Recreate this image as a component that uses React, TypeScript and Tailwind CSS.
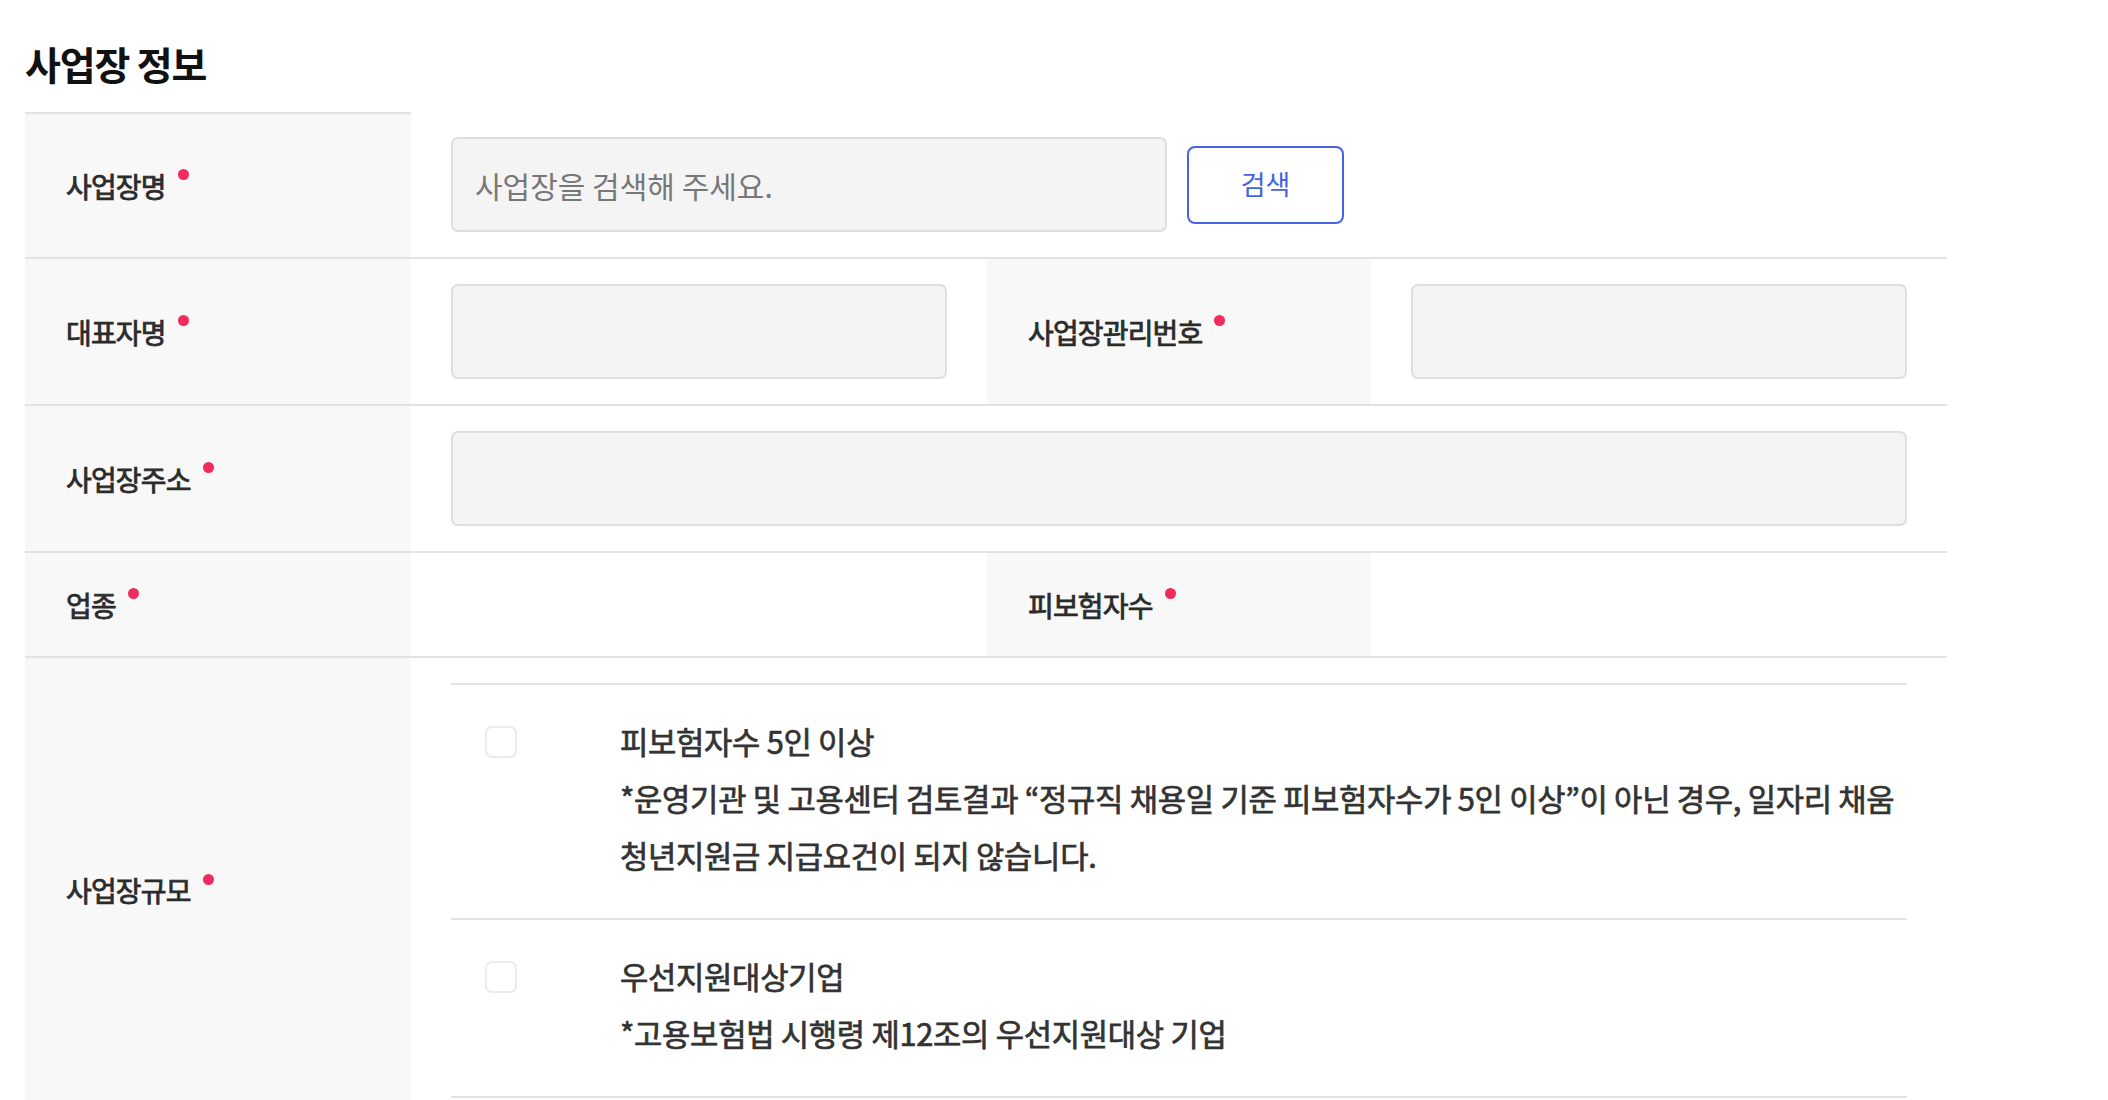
import type { ReactNode } from 'react';
import clsx from 'clsx';

const line = 'border-b-2 border-[#e2e2e2]';

function Label({ children, className }: { children: ReactNode; className?: string }) {
  return (
    <div className={clsx('flex items-center bg-[#f8f8f8] pl-[41px]', line, className)}>
      <span className="text-[28px] tracking-[-0.03em] text-[#2b2b2b] [-webkit-text-stroke:0.8px_#2b2b2b]">{children}</span>
      <span className="-mt-[22px] ml-[12px] h-[11px] w-[11px] rounded-full bg-[#ef2b5f]" />
    </div>
  );
}

function Field({ className, placeholder }: { className?: string; placeholder?: string }) {
  return (
    <input
      type="text"
      placeholder={placeholder}
      className={clsx(
        'h-[95px] rounded-[7px] border-2 border-[#dedede] bg-[#f4f4f4] px-[22px] text-[30px] text-[#333] outline-none placeholder:text-[#777]',
        className,
      )}
    />
  );
}

function CheckItem({ lines }: { lines: string[] }) {
  return (
    <div className={clsx('flex pb-[35px] pt-[27px]', line)}>
      <div className="pl-[34px] pr-[103px]">
        <span className="mt-[14px] block h-[32px] w-[32px] rounded-[7px] border-2 border-[#ebebeb] bg-white" />
      </div>
      <div className="text-[30.8px] leading-[57px] tracking-[-0.01em] text-[#333] [-webkit-text-stroke:0.7px_#333]">
        {lines.map((t) => (
          <p key={t} className="whitespace-nowrap">{t}</p>
        ))}
      </div>
    </div>
  );
}

export default function App() {
  return (
    <div className="min-h-screen bg-white pl-[25px] pt-[38px] font-['Noto_Sans_CJK_KR','Noto_Sans',sans-serif]">
      <h2 className="mb-[24px] text-[39px] font-bold leading-[50px] tracking-[-0.03em] text-[#111]">사업장 정보</h2>

      <div className="grid w-[1922px] grid-cols-[386px_1fr_384px_1fr]">
        {/* 사업장명 */}
        <Label className="border-t-2">사업장명</Label>
        <div className={clsx('col-span-3 flex items-center px-[40px] py-[25px]', line)}>
          <Field className="w-[716px]" placeholder="사업장을 검색해 주세요." />
          <button className="ml-[20px] h-[78px] w-[157px] rounded-[8px] border-2 border-[#4763e4] bg-white text-[27px] text-[#4763e4]">
            검색
          </button>
        </div>

        {/* 대표자명 / 사업장관리번호 */}
        <Label>대표자명</Label>
        <div className={clsx('flex items-center px-[40px] py-[25px]', line)}>
          <Field className="w-full" />
        </div>
        <Label>사업장관리번호</Label>
        <div className={clsx('flex items-center px-[40px] py-[25px]', line)}>
          <Field className="w-full" />
        </div>

        {/* 사업장주소 */}
        <Label>사업장주소</Label>
        <div className={clsx('col-span-3 flex items-center px-[40px] py-[25px]', line)}>
          <Field className="w-full" />
        </div>

        {/* 업종 / 피보험자수 */}
        <Label className="h-[105px]">업종</Label>
        <div className={line} />
        <Label>피보험자수</Label>
        <div className={line} />

        {/* 사업장규모 */}
        <Label>사업장규모</Label>
        <div className={clsx('col-span-3 px-[40px] pb-[24px] pt-[25px]', line)}>
          <div className="border-t-2 border-[#e2e2e2]">
            <CheckItem
              lines={[
                '피보험자수 5인 이상',
                '*운영기관 및 고용센터 검토결과 “정규직 채용일 기준 피보험자수가 5인 이상”이 아닌 경우, 일자리 채움',
                '청년지원금 지급요건이 되지 않습니다.',
              ]}
            />
            <CheckItem lines={['우선지원대상기업', '*고용보험법 시행령 제12조의 우선지원대상 기업']} />
          </div>
        </div>
      </div>
    </div>
  );
}
